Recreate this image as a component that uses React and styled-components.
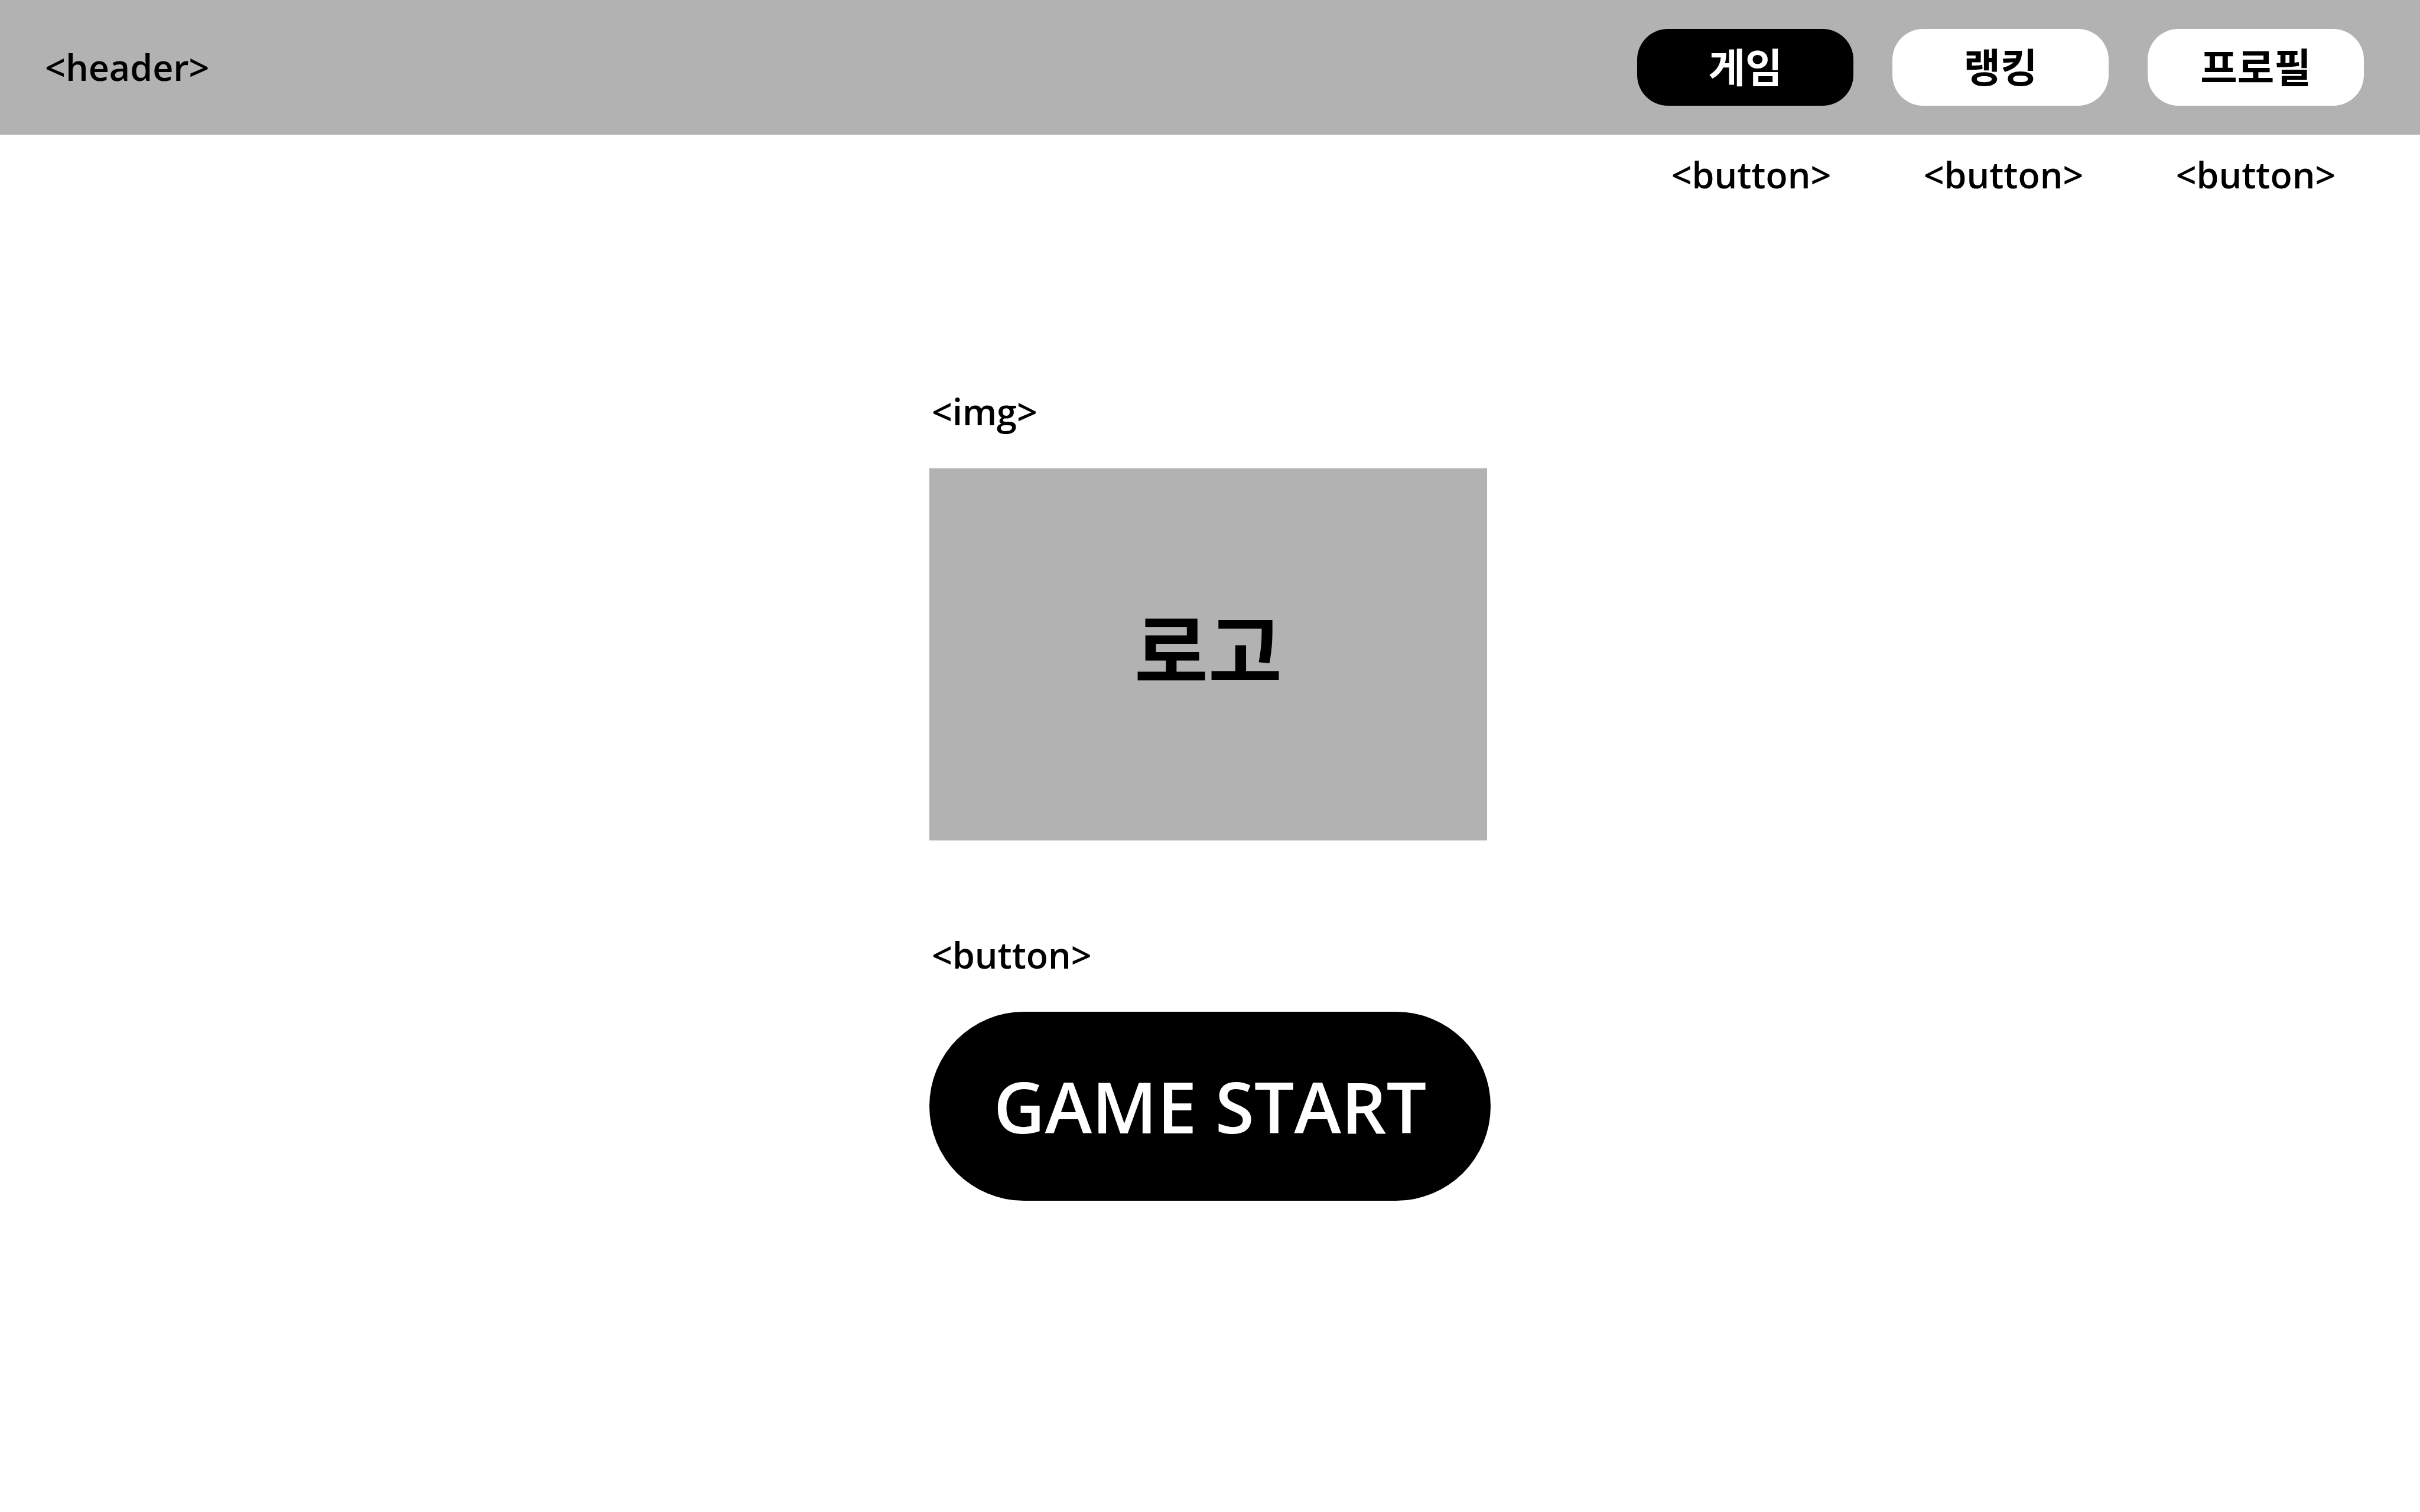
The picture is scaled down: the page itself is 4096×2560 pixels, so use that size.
import React, { useState } from 'react';
import styled, { createGlobalStyle } from 'styled-components';

const GlobalStyle = createGlobalStyle`
  *, *::before, *::after {
    box-sizing: border-box;
  }

  body {
    margin: 0;
    background: #ffffff;
    color: #000000;
    font-family: "Open Sans", "Noto Sans CJK KR", sans-serif;
  }
`;

const Header = styled.header`
  display: flex;
  align-items: center;
  justify-content: space-between;
  padding: 49px 95px 49px 76px;
  background: #b2b2b2;
`;

const Caption = styled.span`
  display: block;
  font-size: 61px;
  font-weight: 600;
  line-height: 84px;
  white-space: nowrap;
`;

const Nav = styled.nav`
  display: flex;
  gap: 66px;
`;

const NavButton = styled.button`
  width: 366px;
  height: 130px;
  padding: 0 0 6px;
  border: 0;
  border-radius: 52px;
  background: ${(p) => (p.$active ? '#000000' : '#ffffff')};
  color: ${(p) => (p.$active ? '#ffffff' : '#000000')};
  font-family: "Noto Sans CJK KR", sans-serif;
  font-size: 68px;
  font-weight: 700;
  line-height: 100px;
  cursor: pointer;
`;

const NavCaptions = styled.div`
  display: flex;
  justify-content: flex-end;
  gap: 61px;
  padding: 26px 95px 0 0;
`;

const NavCaption = styled(Caption)`
  width: 366px;
  text-align: center;
`;

const Main = styled.main`
  display: flex;
  flex-direction: column;
  align-items: center;
  gap: 152px;
  padding: 317px 0;
`;

const Block = styled.section`
  display: flex;
  flex-direction: column;
  align-items: flex-start;
  gap: 54px;
  width: 950px;
`;

const BlockCaption = styled(Caption)`
  padding-left: 4px;
`;

const Logo = styled.div`
  display: flex;
  align-items: center;
  justify-content: center;
  width: 944px;
  height: 630px;
  padding-bottom: 26px;
  background: #b2b2b2;
  font-family: "Noto Sans CJK KR", sans-serif;
  font-size: 136px;
  font-weight: 700;
  line-height: 200px;
`;

const StartButton = styled.button`
  width: 100%;
  height: 320px;
  padding: 0;
  border: 0;
  border-radius: 160px;
  background: #000000;
  color: #ffffff;
  font-family: inherit;
  font-size: 120px;
  font-weight: 600;
  line-height: 160px;
  cursor: pointer;
`;

const pages = ['게임', '랭킹', '프로필'];

export default function App() {
  const [current, setCurrent] = useState(pages[0]);

  return (
    <>
      <GlobalStyle />
      <Header>
        <Caption>&lt;header&gt;</Caption>
        <Nav>
          {pages.map((page) => (
            <NavButton
              key={page}
              type="button"
              $active={page === current}
              onClick={() => setCurrent(page)}
            >
              {page}
            </NavButton>
          ))}
        </Nav>
      </Header>
      <NavCaptions>
        {pages.map((page) => (
          <NavCaption key={page}>&lt;button&gt;</NavCaption>
        ))}
      </NavCaptions>
      <Main>
        <Block>
          <BlockCaption>&lt;img&gt;</BlockCaption>
          <Logo>로고</Logo>
        </Block>
        <Block>
          <BlockCaption>&lt;button&gt;</BlockCaption>
          <StartButton type="button">GAME START</StartButton>
        </Block>
      </Main>
    </>
  );
}
